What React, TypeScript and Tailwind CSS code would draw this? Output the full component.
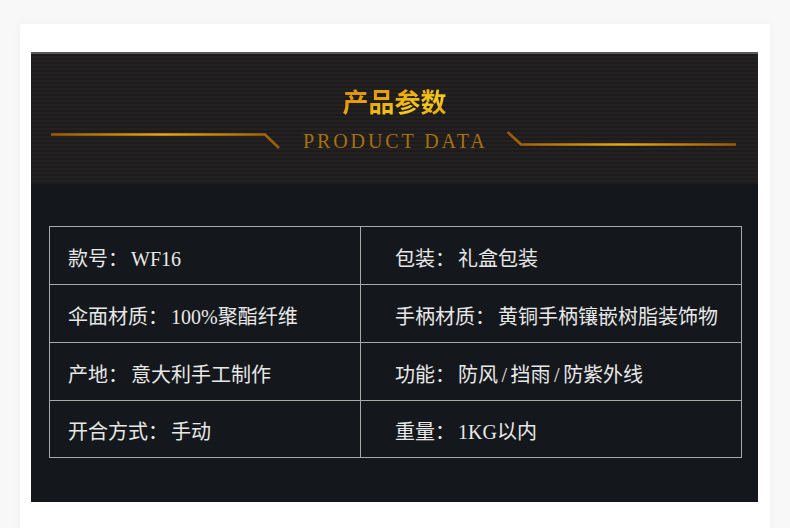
import React from "react";

const rows: [string, string, string, string][] = [
  ["款号", "WF16", "包装", "礼盒包装"],
  ["伞面材质", "100%聚酯纤维", "手柄材质", "黄铜手柄镶嵌树脂装饰物"],
  ["产地", "意大利手工制作", "功能", "防风/挡雨/防紫外线"],
  ["开合方式", "手动", "重量", "1KG以内"],
];

const heights = ["h-[57px]", "h-[58px]", "h-[58px]", "h-[57px]"];

function Value({ text }: { text: string }) {
  const parts = text.split("/");
  return (
    <span className="ml-[3px]">
      {parts.map((p, i) => (
        <React.Fragment key={i}>
          {i > 0 && <span className="px-[3.5px]">/</span>}
          {p}
        </React.Fragment>
      ))}
    </span>
  );
}

function GoldGrad({ id }: { id: string }) {
  return (
    <defs>
      <linearGradient id={id} x1="0" y1="0" x2="1" y2="0">
        <stop offset="0" stopColor="#9a5a06" />
        <stop offset="0.5" stopColor="#eaa90f" />
        <stop offset="1" stopColor="#9a5a06" />
      </linearGradient>
    </defs>
  );
}

export default function App() {
  return (
    <div className="w-[790px] h-[528px] overflow-hidden bg-[#f8f8f8] pt-[24px] pl-[20px] pr-[20px]">
      <div className="bg-white h-[520px] shadow-[0_0_10px_rgba(0,0,0,0.04)] pt-[28px] pl-[11px] pr-[12px]">
        <div className="w-[727px]" style={{ fontFamily: '"Liberation Serif", "Noto Sans CJK SC", serif' }}>
          {/* header */}
          <div className="h-[132px] border-t-2 border-[#595959] bg-[repeating-linear-gradient(180deg,#1d1b1c_0px,#1d1b1c_2px,#232122_2px,#232122_4px)] flex flex-col items-center">
            <div
              className="mt-[32px] text-[26px] leading-[30px] font-bold bg-[linear-gradient(160deg,#d98a04_0%,#e9a50c_40%,#f8c81c_70%,#e0a008_100%)] bg-clip-text text-transparent"
              style={{ fontFamily: '"Noto Sans CJK SC", sans-serif' }}
            >
              产品参数
            </div>
            <div className="mt-[12px] flex items-start w-full pl-[20px]">
              <svg width="230" height="20" viewBox="0 0 230 20" className="mt-[2px]">
                <GoldGrad id="gl" />
                <polyline points="0,4.5 214,4.5 228,18" fill="none" stroke="url(#gl)" strokeWidth="2.6" />
              </svg>
              <div className="ml-[22px] w-[186px] text-[20px] leading-[20px] tracking-[2.9px] whitespace-nowrap text-[#a8700e] mt-[3px]">
                PRODUCT DATA
              </div>
              <svg width="230" height="20" viewBox="0 0 230 20" className="ml-[18px] mt-[2px]">
                <GoldGrad id="gr" />
                <polyline points="0.5,2 14,14.5 229,14.5" fill="none" stroke="url(#gr)" strokeWidth="2.6" />
              </svg>
            </div>
          </div>
          {/* body */}
          <div className="bg-[#14181c] h-[318px] pt-[42px] pl-[18px]">
            <div className="w-[693px] border border-[#a9a9a9]">
              {rows.map((r, i) => (
                <div key={i} className={`flex ${heights[i]} ${i > 0 ? "border-t border-[#a9a9a9]" : ""}`}>
                  <div className="w-[311px] border-r border-[#a9a9a9] flex items-center pl-[18px] pt-[6px] text-[20px] text-[#e8e8e8] whitespace-nowrap">
                    {r[0]}：<Value text={r[1]} />
                  </div>
                  <div className="flex-1 flex items-center pl-[34px] pt-[6px] text-[20px] text-[#e8e8e8] whitespace-nowrap">
                    {r[2]}：<Value text={r[3]} />
                  </div>
                </div>
              ))}
            </div>
          </div>
        </div>
      </div>
    </div>
  );
}
